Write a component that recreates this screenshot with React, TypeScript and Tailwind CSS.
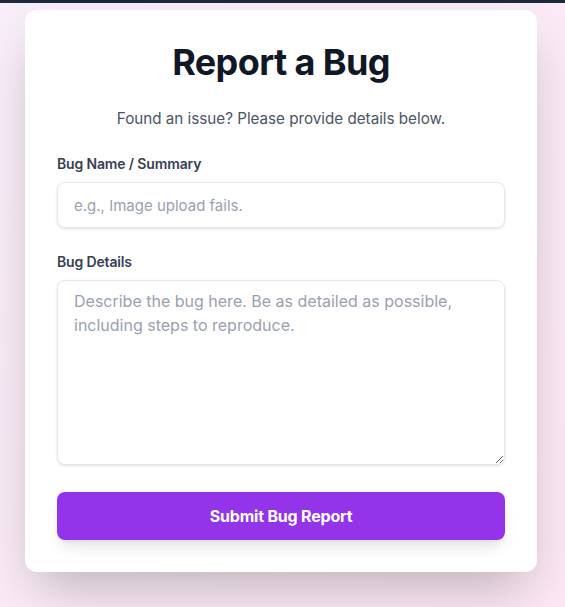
import React, { useState } from 'react';

export default function App() {
  const [name, setName] = useState('');
  const [details, setDetails] = useState('');

  return (
    <div className="min-h-screen bg-gradient-to-br from-[#f8eef9] to-[#fce7f3] font-['Inter',sans-serif]">
      {/* bottom edge of the nav bar */}
      <div className="h-[3px] bg-[#1e293b]" />

      <div className="pt-[7px] pb-10">
        <form
          className="ml-[25px] w-[512px] bg-white rounded-xl shadow-2xl p-8"
          onSubmit={(e) => e.preventDefault()}
        >
          <h1 className="text-4xl font-bold text-gray-900 text-center tracking-[-0.6px]">Report a Bug</h1>
          <p className="mt-[25px] text-[15.2px] leading-6 text-gray-600 text-center">
            Found an issue? Please provide details below.
          </p>

          {/* Nome do bug */}
          <div className="mt-[23px]">
            <label htmlFor="bug-name" className="block text-sm font-semibold text-gray-700 mb-2 tracking-[-0.15px]">
              Bug Name / Summary
            </label>
            <input
              id="bug-name"
              type="text"
              value={name}
              onChange={(e) => setName(e.target.value)}
              placeholder="e.g., Image upload fails."
              className="block w-full h-[46px] px-4 text-[15px] text-gray-900 placeholder-gray-400 border border-gray-200 rounded-lg shadow-sm focus:outline-none"
            />
          </div>

          {/* Detalhes */}
          <div className="mt-6">
            <label htmlFor="bug-details" className="block text-sm font-semibold text-gray-700 mb-2 tracking-[-0.15px]">
              Bug Details
            </label>
            <textarea
              id="bug-details"
              value={details}
              onChange={(e) => setDetails(e.target.value)}
              placeholder="Describe the bug here. Be as detailed as possible, including steps to reproduce."
              className="block w-full h-[185px] px-4 py-2 text-base leading-6 text-gray-900 placeholder-gray-400 border border-gray-200 rounded-lg shadow-sm focus:outline-none"
            />
          </div>

          <button
            type="submit"
            className="mt-[27px] w-full h-12 rounded-lg bg-[#9333ea] text-white text-base font-bold tracking-[-0.2px] shadow-lg"
          >
            Submit Bug Report
          </button>
        </form>
      </div>
    </div>
  );
}
